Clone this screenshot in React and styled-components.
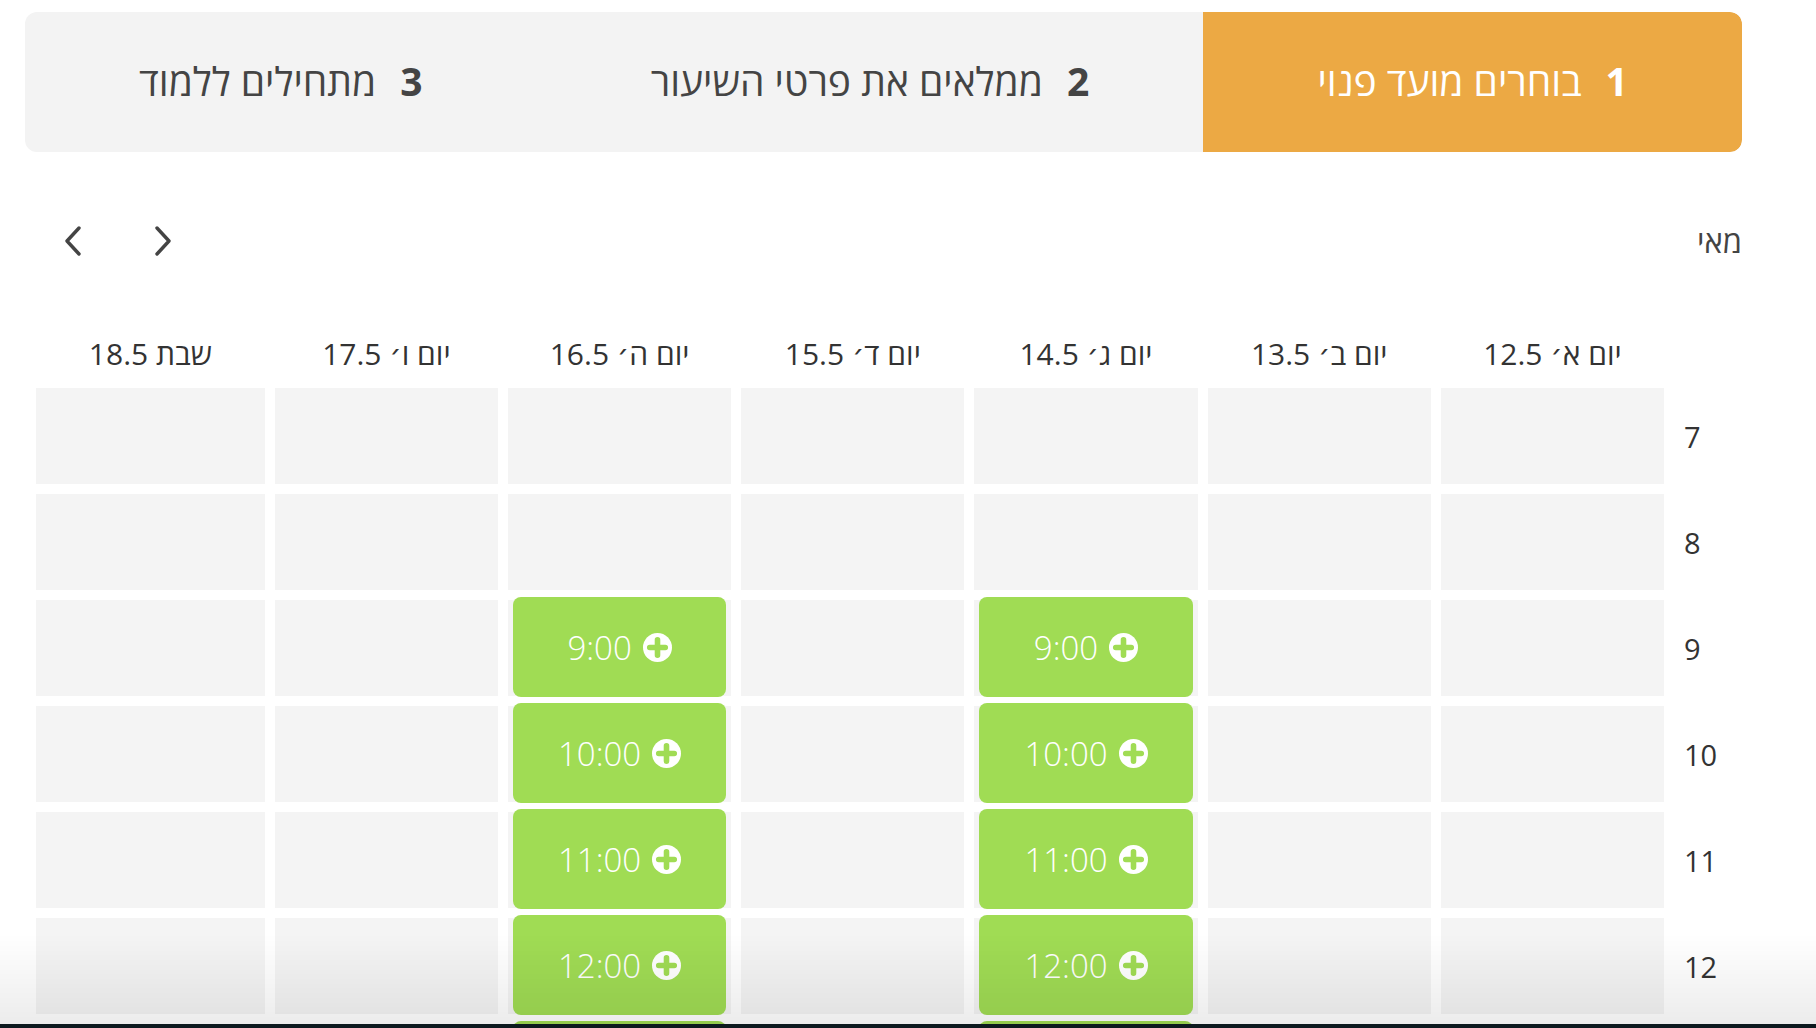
import React from 'react';
import styled, { createGlobalStyle } from 'styled-components';

const GlobalStyle = createGlobalStyle`
  html, body {
    margin: 0;
    padding: 0;
    background: #fff;
    font-family: "Open Sans", "DejaVu Sans", sans-serif;
    overflow: hidden;
  }
`;

const Page = styled.div`
  direction: rtl;
  padding: 12px 74px 0 25px;
`;

const Stepper = styled.div`
  display: flex;
  height: 140px;
  background: #f3f3f3;
  border-radius: 12px;
  overflow: hidden;
`;

const Step = styled.div`
  flex: 1 1 auto;
  display: flex;
  align-items: center;
  justify-content: center;
  gap: 24px;
  padding-bottom: 4px;
  font-size: 39px;
  color: ${p => (p.active ? '#fff' : '#444')};
  background: ${p => (p.active ? '#eca944' : 'transparent')};
  border-radius: ${p => (p.active ? '0 12px 12px 0' : '0')};
  white-space: nowrap;
`;

const StepNum = styled.span`
  font-weight: 700;
`;

const NavRow = styled.div`
  display: flex;
  align-items: center;
  justify-content: space-between;
  height: 40px;
  margin-top: 69px;
  padding-left: 28px;
`;

const Month = styled.div`
  font-size: 31px;
  color: #444;
`;

const Arrows = styled.div`
  display: flex;
  gap: 50px;
`;

const ArrowBtn = styled.button`
  width: 40px;
  height: 40px;
  border: 0;
  background: none;
  padding: 0;
  display: flex;
  align-items: center;
  justify-content: center;
  cursor: pointer;
`;

const Grid = styled.div`
  display: grid;
  grid-template-columns: 68px repeat(6, 1fr) 1.025fr;
  grid-auto-rows: 96px;
  grid-template-rows: 50px;
  gap: 10px;
  margin-top: 67px;
  padding-left: 11px;
`;

const DayHead = styled.div`
  display: flex;
  align-items: center;
  justify-content: center;
  font-size: 30px;
  color: #333;
  white-space: nowrap;
`;

const HourLabel = styled.div`
  display: flex;
  align-items: center;
  justify-content: flex-end;
  padding-left: 10px;
  font-size: 29px;
  color: #333;
`;

const Cell = styled.div`
  background: #f4f4f4;
  padding: 0 5px;
`;

const Slot = styled.button`
  width: 100%;
  height: 100px;
  margin-top: -3px;
  border: 0;
  border-radius: 8px;
  background: #a0dc54;
  color: #fff;
  display: flex;
  align-items: center;
  justify-content: center;
  gap: 11px;
  font-family: "Open Sans", "DejaVu Sans", sans-serif;
  font-size: 33px;
  font-weight: 300;
  cursor: pointer;
`;

const Fade = styled.div`
  position: fixed;
  left: 0;
  right: 0;
  bottom: 4px;
  height: 90px;
  pointer-events: none;
  background: linear-gradient(to bottom, rgba(0, 0, 0, 0), rgba(0, 0, 0, 0.075));
`;

const BottomBar = styled.div`
  position: fixed;
  left: 0;
  right: 0;
  bottom: 0;
  height: 4px;
  background: #0c191e;
`;

const Chevron = ({ dir }) => (
  <svg width="22" height="32" viewBox="0 0 22 32" fill="none">
    <path
      d={dir === 'left' ? 'M17 3 L5 16 L17 29' : 'M5 3 L17 16 L5 29'}
      stroke="#444"
      strokeWidth="3.4"
      strokeLinecap="round"
      strokeLinejoin="round"
    />
  </svg>
);

const PlusIcon = () => (
  <svg width="29" height="29" viewBox="0 0 28 28">
    <circle cx="14" cy="14" r="14" fill="#fff" />
    <path d="M14 6.5 V21.5 M6.5 14 H21.5" stroke="#a0dc54" strokeWidth="5.4" strokeLinecap="round" />
  </svg>
);

const days = ['יום א׳ 12.5', 'יום ב׳ 13.5', 'יום ג׳ 14.5', 'יום ד׳ 15.5', 'יום ה׳ 16.5', 'יום ו׳ 17.5', 'שבת 18.5'];
const hours = [7, 8, 9, 10, 11, 12, 13, 14, 15, 16, 17, 18, 19, 20];
// open slots: day index -> hours
const openDays = [2, 4];
const isOpen = (d, h) => openDays.includes(d) && h >= 9 && h <= 16;

export default function App() {
  return (
    <Page>
      <GlobalStyle />
      <Stepper>
        <Step active>
          <StepNum>1</StepNum>
          <span>בוחרים מועד פנוי</span>
        </Step>
        <Step>
          <StepNum>2</StepNum>
          <span>ממלאים את פרטי השיעור</span>
        </Step>
        <Step>
          <StepNum>3</StepNum>
          <span>מתחילים ללמוד</span>
        </Step>
      </Stepper>

      <NavRow>
        <Month>מאי</Month>
        <Arrows>
          <ArrowBtn aria-label="הבא">
            <Chevron dir="right" />
          </ArrowBtn>
          <ArrowBtn aria-label="הקודם">
            <Chevron dir="left" />
          </ArrowBtn>
        </Arrows>
      </NavRow>

      <Grid>
        <div />
        {days.map(d => (
          <DayHead key={d}>{d}</DayHead>
        ))}
        {hours.map(h => (
          <React.Fragment key={h}>
            <HourLabel>{h}</HourLabel>
            {days.map((d, i) => (
              <Cell key={d}>
                {isOpen(i, h) && (
                  <Slot>
                    <PlusIcon />
                    <span>{h}:00</span>
                  </Slot>
                )}
              </Cell>
            ))}
          </React.Fragment>
        ))}
      </Grid>
      <Fade />
      <BottomBar />
    </Page>
  );
}
